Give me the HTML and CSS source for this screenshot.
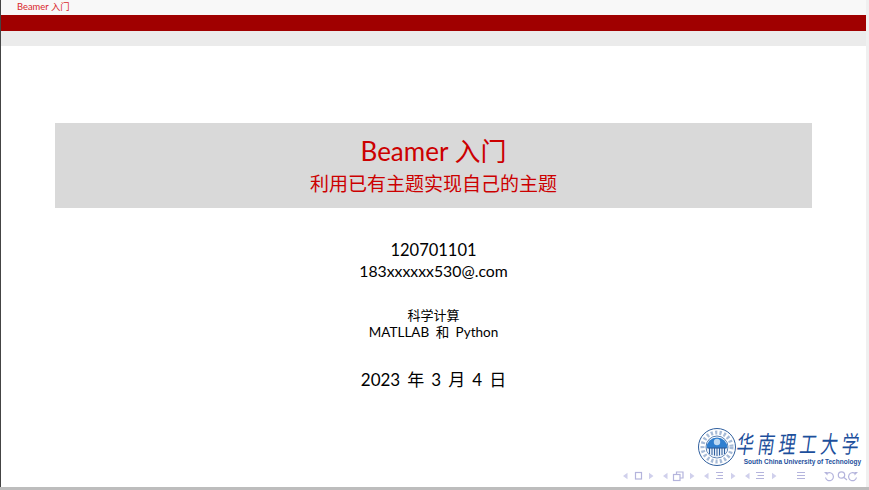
FILE: index.html
```html
<!DOCTYPE html>
<html lang="zh-CN">
<head>
	<meta charset="UTF-8">
	<title>Beamer 入门</title>
	<link rel="stylesheet" href="styles.css">
</head>
<body>
	<div class="screen">
		<div class="slide">
			<div class="head-title">Beamer 入门</div>
			<div class="head-bar"></div>
			<div class="head-sub"></div>

			<div class="title-box">
				<div class="title">Beamer 入门</div>
				<div class="subtitle">利用已有主题实现自己的主题</div>
			</div>

			<div class="author">120701101</div>
			<div class="email">183xxxxxx530@.com</div>
			<div class="inst">科学计算</div>
			<div class="inst-en">MATLLAB 和 Python</div>
			<div class="date">2023 年 3 月 4 日</div>

			<div class="foot">
				<div class="logo">
					<svg class="seal" width="38" height="38" viewBox="0 0 38 38">
						<circle cx="19" cy="19" r="18.500" fill="#fff" stroke="#2f5f9e" stroke-width="1"/>
						<circle cx="19" cy="19" r="14.500" fill="none" stroke="#5f84b6" stroke-width="4" stroke-dasharray="2.200 2.200" opacity="0.55"/>
						<circle cx="19" cy="19" r="11" fill="#fff" stroke="#2f5f9e" stroke-width="0.800"/>
						<path d="M8.500 20a10.500 10.500 0 0 1 21 0z" fill="#2f7fd0"/>
						<circle cx="19" cy="14" r="3.200" fill="#bcd8f2"/>
						<path d="M9 20h20v2a10.500 10.500 0 0 1-20 0z" fill="#e6eef7"/>
						<path d="M11.500 20v6M14 20v7M16.500 20v7.500M19 20v8M21.500 20v7.500M24 20v7M26.500 20v6" stroke="#2f5f9e" stroke-width="1"/>
						<path d="M9.500 20h19" stroke="#2f5f9e" stroke-width="1.200"/>
					</svg>
					<div class="logo-text">
						<div class="logo-cn">华南理工大学</div>
						<div class="logo-en">South China University of Technology</div>
					</div>
				</div>
				<svg class="nav" width="240" height="12" viewBox="0 0 240 12">
					<g fill="#d0d0ec">
						<path d="M0 6l4.500-3.200v6.400zM26 2.800l4.500 3.200-4.500 3.200zM40 6l4.500-3.200v6.400zM67 2.800l4.500 3.200-4.500 3.200zM81 6l4.500-3.200v6.400zM108 2.800l4.500 3.200-4.500 3.200zM122 6l4.500-3.200v6.400zM149 2.800l4.500 3.200-4.500 3.200z"/>
					</g>
					<g fill="none" stroke="#b4b4dc" stroke-width="1.200">
						<rect x="12.500" y="2.500" width="6" height="6.500"/>
						<rect x="50.500" y="4.500" width="6.500" height="6"/>
						<path d="M53.500 4.500v-2.500h6.500v6h-3"/>
						<path d="M93 2.500h7M94.500 5.500h5.500M93 8.500h7M133 2.500h8M134.500 5.500h6.500M133 8.500h8M174 2.500h8M174 5.500h8M174 8.500h8"/>
						<path d="M204 3.500a4 4 0 1 1-1.500 4"/>
						<circle cx="218.500" cy="5" r="3.200"/>
						<path d="M221 7.500l3 2.500"/>
						<path d="M232 3.500a4 4 0 1 0 1.500 4"/>
					</g>
					<path d="M201 2h3.500v3.500zM235 2h-3.500v3.500z" fill="#b4b4dc"/>
				</svg>
			</div>
		</div>
		<div class="gutter"></div>
	</div>
	<div class="bottom"></div>
</body>
</html>
```

FILE: styles.css
```css
* {
	margin: 0;
	padding: 0;
	box-sizing: border-box;
}
html, body {
	width: 869px;
	height: 490px;
	overflow: hidden;
	background: #fff;
}
body {
	display: flex;
	flex-direction: column;
	font-family: "Lato", "Noto Sans CJK SC", sans-serif;
	color: #000;
}
.screen {
	flex: 1;
	display: flex;
	border-left: 1px solid #444;
	min-height: 0;
}
.slide {
	flex: 1;
	display: flex;
	flex-direction: column;
	align-items: center;
	min-width: 0;
}
.gutter {
	width: 3px;
	background: #f0f0f0;
}
.bottom {
	height: 3px;
	background: #bdbdbd;
}

.head-title {
	align-self: stretch;
	height: 15px;
	padding-left: 16px;
	background: #f8f8f8;
	color: #d8272b;
	font-size: 9.400px;
	line-height: 13px;
}
.head-bar {
	align-self: stretch;
	height: 16px;
	background: #a00000;
}
.head-sub {
	align-self: stretch;
	height: 15px;
	background: #ebebeb;
}

.title-box {
	width: 757px;
	height: 85px;
	margin-top: 77px;
	padding-top: 10px;
	background: #d9d9d9;
	color: #cc0000;
	text-align: center;
}
.title {
	font-size: 26px;
	line-height: 36px;
}
.subtitle {
	margin-top: 2px;
	font-size: 19px;
	line-height: 26px;
}

.author {
	margin-top: 31px;
	font-size: 16.500px;
	line-height: 22px;
}
.email {
	margin-top: -1px;
	font-size: 15.800px;
	line-height: 21px;
}
.inst {
	margin-top: 26px;
	font-size: 13px;
	line-height: 16px;
}
.inst-en {
	margin-top: 1px;
	font-size: 13.500px;
	line-height: 16px;
	word-spacing: 3px;
}
.date {
	margin-top: 28px;
	font-size: 17px;
	line-height: 24px;
	word-spacing: 2.700px;
}

.foot {
	margin-top: auto;
	align-self: stretch;
	display: flex;
	flex-direction: column;
	align-items: flex-end;
	padding: 0 3px 5px 0;
}
.logo {
	display: flex;
	align-items: center;
	gap: 1px;
	padding-right: 2px;
}
.logo-text {
	width: 124px;
	text-align: right;
	color: #1d4f9c;
}
.logo-cn {
	font-size: 17px;
	line-height: 29px;
	letter-spacing: 4px;
	font-weight: 400;
	white-space: nowrap;
	transform: skewX(-8deg) scaleY(1.4);
}
.logo-en {
	font-size: 6.500px;
	line-height: 8px;
	font-weight: 700;
	font-family: "Liberation Sans", sans-serif;
	white-space: nowrap;
}
.nav {
	display: block;
	margin-top: 4px;
}
```
